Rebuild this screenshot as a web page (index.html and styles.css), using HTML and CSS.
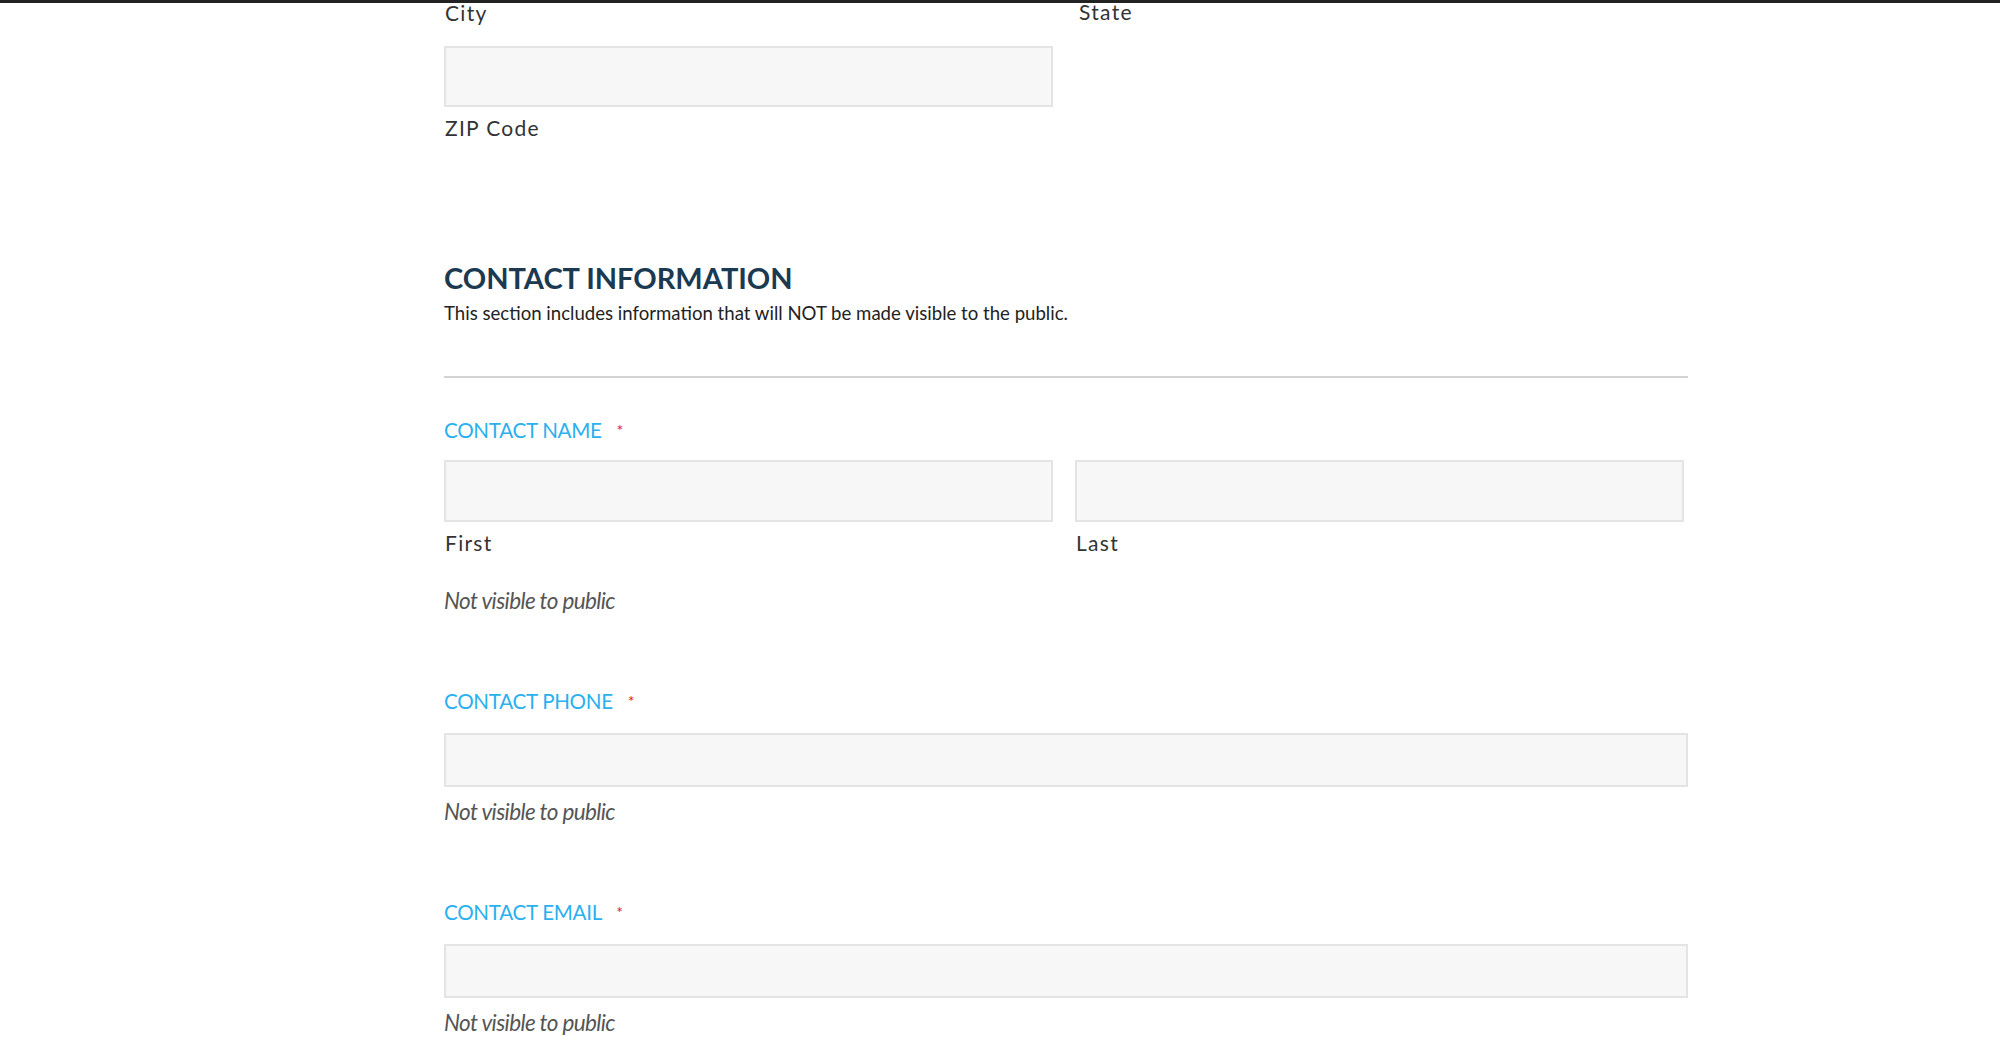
FILE: index.html
```html
<!DOCTYPE html>
<html>
  <head>
    <meta charset="utf-8">
    <link rel="stylesheet" href="styles.css">
  </head>
  <body>
    <div class="form">
      <div class="cols">
        <div class="col">
          <div class="sublabel">City</div>
          <input class="field" type="text">
          <div class="sublabel zip">ZIP Code</div>
        </div>
        <div class="col">
          <div class="sublabel state">State</div>
        </div>
      </div>

      <div class="section">
        <h2>CONTACT INFORMATION</h2>
        <p class="desc">This section includes information that will NOT be made visible to the public.</p>
      </div>
      <hr class="rule">

      <div class="group">
        <label class="label">CONTACT NAME <span class="req">*</span></label>
        <div class="cols name">
          <div class="col">
            <input class="field" type="text">
            <div class="sublabel">First</div>
          </div>
          <div class="col">
            <input class="field" type="text">
            <div class="sublabel">Last</div>
          </div>
        </div>
        <div class="note first-note">Not visible to public</div>
      </div>

      <div class="group">
        <label class="label">CONTACT PHONE <span class="req">*</span></label>
        <input class="field wide" type="text">
        <div class="note">Not visible to public</div>
      </div>

      <div class="group">
        <label class="label">CONTACT EMAIL <span class="req">*</span></label>
        <input class="field wide" type="text">
        <div class="note">Not visible to public</div>
      </div>
    </div>
  </body>
</html>
```

FILE: styles.css
```css
body {
  margin: 0;
  border-top: 3px solid #222;
  background: #fff;
  font-family: Lato, "Liberation Sans", sans-serif;
  color: #222;
}

.form {
  width: 1244px;
  margin-left: 444px;
}

.cols {
  display: flex;
  gap: 22px;
}
.col {
  width: 609px;
}

.sublabel {
  font-size: 21px;
  line-height: 22px;
  letter-spacing: 1.3px;
  color: #333;
  padding-left: 1px;
}
.sublabel:first-child {
  margin-top: -1px;
}
.sublabel.state {
  margin-top: -2px;
  padding-left: 4px;
}
.sublabel.zip {
  margin-top: 10px;
}

.field {
  display: block;
  box-sizing: border-box;
  width: 100%;
  height: 61px;
  margin: 0;
  background: #f7f7f7;
  border: 2px solid #e4e4e4;
  outline: none;
}
.cols:first-child .field {
  margin-top: 22px;
}
.field.wide {
  height: 54px;
  margin-top: 20px;
}

.section {
  margin-top: 122px;
}
.section h2 {
  margin: 0;
  font-size: 29px;
  line-height: 34px;
  font-weight: 700;
  color: #1b3a52;
}
.desc {
  margin: 7px 0 0;
  font-size: 18.6px;
  line-height: 22px;
  color: #222;
}

.rule {
  margin: 52px 0 0;
  border: none;
  border-top: 2px solid #d3d3d3;
  width: 1244px;
}

.group {
  margin-top: 40px;
}
.label {
  display: block;
  font-size: 20.6px;
  line-height: 24px;
  letter-spacing: -0.3px;
  color: #2bb0ef;
}
.req {
  color: #e8141a;
  font-size: 16px;
  vertical-align: top;
  margin-left: 10px;
}

.cols.name {
  margin-top: 18px;
}
.cols.name .field {
  height: 62px;
}
.cols.name .sublabel {
  margin-top: 10px;
}

.note {
  margin-top: 13px;
  font-size: 22.5px;
  line-height: 24px;
  font-style: italic;
  color: #555;
  letter-spacing: -0.6px;
}
.first-note {
  margin-top: 35px;
}
.group + .group {
  margin-top: 76px;
}
```
